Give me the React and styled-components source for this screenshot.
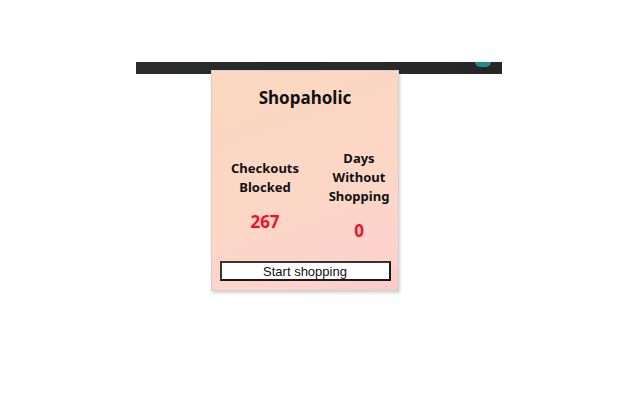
import React from 'react';
import styled, { createGlobalStyle } from 'styled-components';

const stats = [
	{ label: ['Checkouts', 'Blocked'], value: 267 },
	{ label: ['Days', 'Without', 'Shopping'], value: 0 },
];

const GlobalStyle = createGlobalStyle`
	body {
		margin: 0;
		background: #ffffff;
		font-family: "Noto Sans", "Open Sans", sans-serif;
	}
`;

const Stage = styled.div`
	width: 640px;
	height: 400px;
	padding-top: 62px;
	box-sizing: border-box;
`;

// strip of the browser toolbar sitting behind the popup
const Toolbar = styled.div`
	margin-left: 136px;
	width: 366px;
	height: 12px;
	display: flex;
	align-items: flex-start;
	justify-content: flex-end;
	background: linear-gradient(90deg, #2c2c2c 0%, #262a28 40%, #2a2a2a 60%, #262626 100%);
`;

const ToolbarDot = styled.div`
	width: 16px;
	height: 5px;
	margin-right: 11px;
	border-radius: 0 0 8px 8px;
	background: #1f8c86;
`;

const Popup = styled.div`
	margin-left: 211px;
	margin-top: -4px;
	width: 188px;
	height: 221px;
	display: flex;
	flex-direction: column;
	align-items: center;
	box-sizing: border-box;
	border: 1px solid #d6cfcc;
	box-shadow: 1px 2px 3px rgba(0, 0, 0, 0.18);
	background: linear-gradient(160deg, #fbd8c1 0%, #fcd7c6 55%, #fdd3cc 85%, #fbc9c9 100%);
`;

const Title = styled.h1`
	margin: 16px 0 0;
	font-size: 17px;
	line-height: 22px;
	font-weight: 700;
	color: #111;
`;

const StatGrid = styled.div`
	margin-top: 40px;
	width: 100%;
	display: grid;
	grid-template-columns: 106px 82px;
	align-items: center;
`;

const Stat = styled.div`
	display: flex;
	flex-direction: column;
	align-items: center;
	text-align: center;
`;

const StatLabel = styled.div`
	font-size: 13px;
	line-height: 19px;
	font-weight: 700;
	color: #111;
`;

const StatValue = styled.div`
	margin-top: 14px;
	font-size: 17px;
	line-height: 22px;
	font-weight: 700;
	color: #f0102a;
`;

const ShopButton = styled.button`
	margin-top: auto;
	margin-bottom: 9px;
	width: 171px;
	height: 20px;
	padding: 0;
	background: #ffffff;
	border: 2px solid #1a1a1a;
	border-top-color: #3a3330;
	border-left-color: #3a3330;
	font-family: "Liberation Sans", Arial, sans-serif;
	font-size: 13px;
	color: #111;
`;

export default function App() {
	return (
		<Stage>
			<GlobalStyle />
			<Toolbar>
				<ToolbarDot />
			</Toolbar>
			<Popup>
				<Title>Shopaholic</Title>
				<StatGrid>
					{stats.map((s) => (
						<Stat key={s.label[0]}>
							<StatLabel>
								{s.label.map((line) => (
									<div key={line}>{line}</div>
								))}
							</StatLabel>
							<StatValue>{s.value}</StatValue>
						</Stat>
					))}
				</StatGrid>
				<ShopButton>Start shopping</ShopButton>
			</Popup>
		</Stage>
	);
}
